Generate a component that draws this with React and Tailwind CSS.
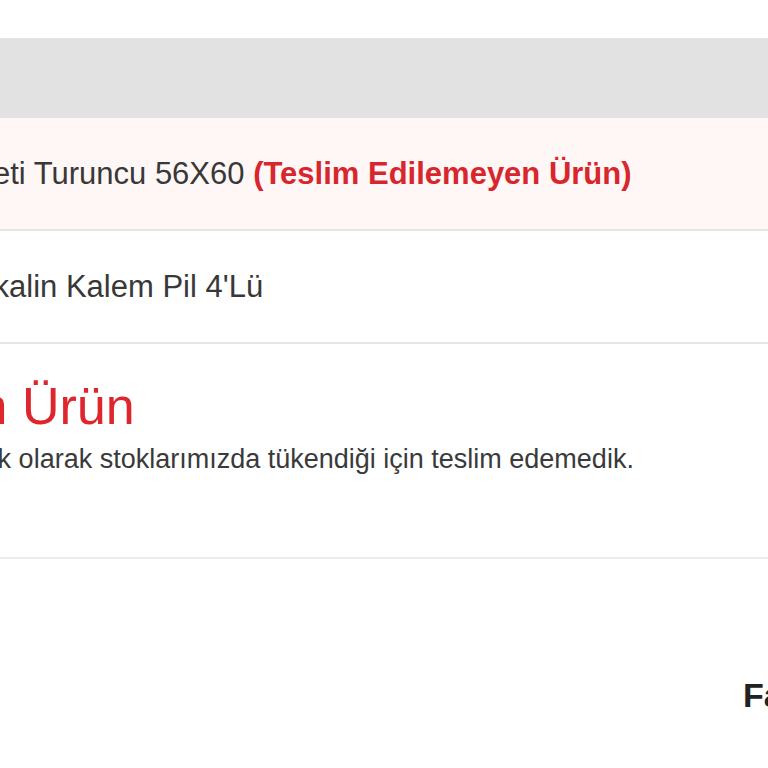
const rows = [
  {
    name: "Çöp Poşeti Turuncu 56X60",
    offset: "ml-[-126px]",
    failed: true,
  },
  {
    name: "Alkalin Kalem Pil 4'Lü",
    offset: "ml-[-34px]",
    failed: false,
  },
];

const App = () => {
  return (
    <div className="h-[768px] w-[768px] overflow-hidden bg-white font-['Liberation_Sans',Arial,sans-serif] text-[#383838]">
      <div className="h-[38px]" />
      <div className="h-[80px] bg-[#e2e2e2]" />

      {rows.map((row) => (
        <div
          key={row.name}
          className={`flex h-[113px] items-center border-b-2 border-[#e6e6e6] ${
            row.failed ? "bg-[#fff6f6]" : "bg-white"
          }`}
        >
          <p
            className={`${row.offset} shrink-0 whitespace-nowrap text-[31px] leading-[1.2]`}
          >
            {row.name}{" "}
            {row.failed && (
              <span className="font-bold text-[#d8262d]">
                (Teslim Edilemeyen Ürün)
              </span>
            )}
          </p>
        </div>
      ))}

      <div className="h-[215px] border-b-2 border-[#ececec] pt-[36px]">
        <p className="ml-[-426px] whitespace-nowrap text-[52px] leading-none text-[#de262d]">
          Teslim Edilemeyen Ürün
        </p>
        <p className="ml-[-163px] mt-[11px] whitespace-nowrap text-[27px] leading-[32px] text-[#3a3a3a]">
          Bu ürünü anlık olarak stoklarımızda tükendiği için teslim edemedik.
        </p>
      </div>

      <div className="mt-[116px] pl-[743px]">
        <p className="whitespace-nowrap text-[34px] font-bold leading-[1.2] text-[#222]">
          Fatura Bilgileri
        </p>
      </div>
    </div>
  );
};

export default App;
